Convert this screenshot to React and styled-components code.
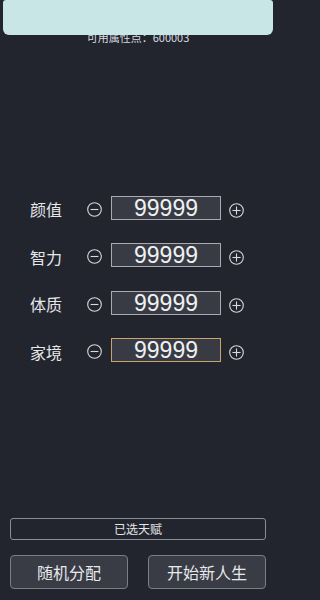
import React from 'react';
import styled, { createGlobalStyle } from 'styled-components';

const GlobalStyle = createGlobalStyle`
  html, body {
    margin: 0;
    padding: 0;
    background: #22252d;
  }
  body {
    font-family: "Noto Sans CJK SC", "Noto Sans", sans-serif;
  }
`;

const stats = [
  { name: '颜值', value: 99999 },
  { name: '智力', value: 99999 },
  { name: '体质', value: 99999 },
  { name: '家境', value: 99999, active: true },
];

const Page = styled.div`
  width: 276px;
  height: 600px;
  display: flex;
  flex-direction: column;
  background: #22252d;
  overflow: hidden;
`;

const Header = styled.div`
  position: relative;
  height: 50px;
`;

const Banner = styled.div`
  position: absolute;
  top: 0;
  left: 3px;
  right: 3px;
  height: 35px;
  background: #c8e6e5;
  border-radius: 3px 3px 6px 6px;
`;

const Points = styled.div`
  padding-top: 31px;
  text-align: center;
  font-size: 11px;
  line-height: 13px;
  color: #d9dbe0;
`;

const StatList = styled.div`
  margin-top: 144px;
  display: flex;
  flex-direction: column;
  gap: 23.5px;
`;

const Row = styled.div`
  display: grid;
  grid-template-columns: 48px 15px 110px 15px;
  column-gap: 9px;
  align-items: center;
  padding-left: 30px;
  height: 24px;
`;

const Label = styled.span`
  font-size: 16px;
  line-height: 24px;
  color: #e6e7ea;
  white-space: nowrap;
  margin-top: 3px;
`;

const IconBtn = styled.button`
  width: 15px;
  height: 15px;
  padding: 0;
  border: none;
  background: none;
  display: flex;
  align-items: center;
  justify-content: center;
  margin-top: ${p => (p.plus ? '5px' : '3px')};
  margin-left: ${p => (p.plus ? '-1px' : '0')};
`;

const ValueBox = styled.div`
  height: 24px;
  box-sizing: border-box;
  border: 1px solid ${p => (p.active ? '#c9a36a' : '#a9abb0')};
  background: #383b43;
  color: #eef0f2;
  font-family: "Liberation Sans", "Noto Sans", sans-serif;
  font-size: 23px;
  line-height: 22px;
  text-align: center;
`;

const Spacer = styled.div`
  flex: 1;
`;

const TalentBar = styled.div`
  margin: 0 10px;
  height: 22px;
  box-sizing: border-box;
  border: 1px solid #8a8d94;
  border-radius: 3px;
  color: #e4e5e8;
  font-size: 12px;
  line-height: 20px;
  text-align: center;
`;

const Buttons = styled.div`
  display: grid;
  grid-template-columns: 1fr 1fr;
  column-gap: 20px;
  padding: 0 10px;
  margin: 15px 0 11px;
`;

const ActionButton = styled.button`
  height: 34px;
  box-sizing: border-box;
  border: 1px solid #7b7e85;
  border-radius: 4px;
  background: #393c44;
  color: #e8e9ec;
  font-family: "Noto Sans CJK SC", sans-serif;
  font-size: 16px;
  padding: 0;
`;

const Minus = () => (
  <svg width="15" height="15" viewBox="0 0 15 15">
    <circle cx="7.5" cy="7.5" r="6.8" fill="none" stroke="#d8d9dc" strokeWidth="1.1" />
    <line x1="3.6" y1="7.5" x2="11.4" y2="7.5" stroke="#d8d9dc" strokeWidth="1.1" />
  </svg>
);

const Plus = () => (
  <svg width="15" height="15" viewBox="0 0 15 15">
    <circle cx="7.5" cy="7.5" r="6.8" fill="none" stroke="#d8d9dc" strokeWidth="1.1" />
    <line x1="3.4" y1="7.5" x2="11.6" y2="7.5" stroke="#d8d9dc" strokeWidth="1.1" />
    <line x1="7.5" y1="3.4" x2="7.5" y2="11.6" stroke="#d8d9dc" strokeWidth="1.1" />
  </svg>
);

export default function App() {
  return (
    <>
      <GlobalStyle />
      <Page>
        <Header>
          <Points>可用属性点：600003</Points>
          <Banner />
        </Header>

        <StatList>
          {stats.map(s => (
            <Row key={s.name}>
              <Label>{s.name}</Label>
              <IconBtn><Minus /></IconBtn>
              <ValueBox active={s.active}>{s.value}</ValueBox>
              <IconBtn plus><Plus /></IconBtn>
            </Row>
          ))}
        </StatList>

        <Spacer />

        <TalentBar>已选天赋</TalentBar>
        <Buttons>
          <ActionButton>随机分配</ActionButton>
          <ActionButton>开始新人生</ActionButton>
        </Buttons>
      </Page>
    </>
  );
}
